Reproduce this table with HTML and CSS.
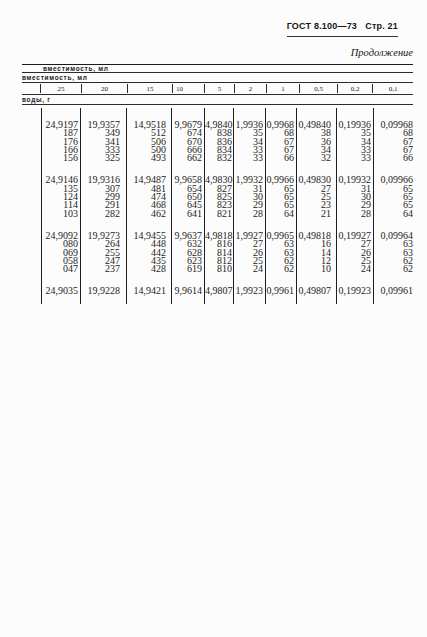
FILE: index.html
```html
<!DOCTYPE html>
<html lang="ru">
<head>
<meta charset="utf-8">
<title>ГОСТ 8.100—73 Стр. 21</title>
<link rel="stylesheet" href="styles.css">
</head>
<body>
<div class="page">
  <div class="head"><span class="gost">ГОСТ 8.100—73 &nbsp; Стр. 21</span></div>
  <div class="cont">Продолжение</div>
  <div class="table">
    <div class="hrow r1">вместимость, мл</div>
    <div class="hrow r2">вместимость, мл</div>
    <div class="hrow r3">
      <span class="hc c0"></span>
      <span class="hc c1">25</span>
      <span class="hc c2">20</span>
      <span class="hc c3">15</span>
      <span class="hc c4 left">10</span>
      <span class="hc c5">5</span>
      <span class="hc c6">2</span>
      <span class="hc c7">1</span>
      <span class="hc c8">0,5</span>
      <span class="hc c9">0,2</span>
      <span class="hc c10 last">0,1</span>
    </div>
    <div class="hrow r4">воды, г</div>
    <div class="body">
      <div class="col c1">
        <div class="grp"><span>24,9197</span><span>187</span><span>176</span><span>166</span><span>156</span></div>
        <div class="grp"><span>24,9146</span><span>135</span><span>124</span><span>114</span><span>103</span></div>
        <div class="grp"><span>24,9092</span><span>080</span><span>069</span><span>058</span><span>047</span></div>
        <div class="grp fin"><span>24,9035</span></div>
      </div>
      <div class="col c2">
        <div class="grp"><span>19,9357</span><span>349</span><span>341</span><span>333</span><span>325</span></div>
        <div class="grp"><span>19,9316</span><span>307</span><span>299</span><span>291</span><span>282</span></div>
        <div class="grp"><span>19,9273</span><span>264</span><span>255</span><span>247</span><span>237</span></div>
        <div class="grp fin"><span>19,9228</span></div>
      </div>
      <div class="col c3">
        <div class="grp"><span>14,9518</span><span>512</span><span>506</span><span>500</span><span>493</span></div>
        <div class="grp"><span>14,9487</span><span>481</span><span>474</span><span>468</span><span>462</span></div>
        <div class="grp"><span>14,9455</span><span>448</span><span>442</span><span>435</span><span>428</span></div>
        <div class="grp fin"><span>14,9421</span></div>
      </div>
      <div class="col c4">
        <div class="grp"><span>9,9679</span><span>674</span><span>670</span><span>666</span><span>662</span></div>
        <div class="grp"><span>9,9658</span><span>654</span><span>650</span><span>645</span><span>641</span></div>
        <div class="grp"><span>9,9637</span><span>632</span><span>628</span><span>623</span><span>619</span></div>
        <div class="grp fin"><span>9,9614</span></div>
      </div>
      <div class="col c5">
        <div class="grp"><span>4,9840</span><span>838</span><span>836</span><span>834</span><span>832</span></div>
        <div class="grp"><span>4,9830</span><span>827</span><span>825</span><span>823</span><span>821</span></div>
        <div class="grp"><span>4,9818</span><span>816</span><span>814</span><span>812</span><span>810</span></div>
        <div class="grp fin"><span>4,9807</span></div>
      </div>
      <div class="col c6">
        <div class="grp"><span>1,9936</span><span>35</span><span>34</span><span>33</span><span>33</span></div>
        <div class="grp"><span>1,9932</span><span>31</span><span>30</span><span>29</span><span>28</span></div>
        <div class="grp"><span>1,9927</span><span>27</span><span>26</span><span>25</span><span>24</span></div>
        <div class="grp fin"><span>1,9923</span></div>
      </div>
      <div class="col c7">
        <div class="grp"><span>0,9968</span><span>68</span><span>67</span><span>67</span><span>66</span></div>
        <div class="grp"><span>0,9966</span><span>65</span><span>65</span><span>65</span><span>64</span></div>
        <div class="grp"><span>0,9965</span><span>63</span><span>63</span><span>62</span><span>62</span></div>
        <div class="grp fin"><span>0,9961</span></div>
      </div>
      <div class="col c8">
        <div class="grp"><span>0,49840</span><span>38</span><span>36</span><span>34</span><span>32</span></div>
        <div class="grp"><span>0,49830</span><span>27</span><span>25</span><span>23</span><span>21</span></div>
        <div class="grp"><span>0,49818</span><span>16</span><span>14</span><span>12</span><span>10</span></div>
        <div class="grp fin"><span>0,49807</span></div>
      </div>
      <div class="col c9">
        <div class="grp"><span>0,19936</span><span>35</span><span>34</span><span>33</span><span>33</span></div>
        <div class="grp"><span>0,19932</span><span>31</span><span>30</span><span>29</span><span>28</span></div>
        <div class="grp"><span>0,19927</span><span>27</span><span>26</span><span>25</span><span>24</span></div>
        <div class="grp fin"><span>0,19923</span></div>
      </div>
      <div class="col c10 last">
        <div class="grp"><span>0,09968</span><span>68</span><span>67</span><span>67</span><span>66</span></div>
        <div class="grp"><span>0,09966</span><span>65</span><span>65</span><span>65</span><span>64</span></div>
        <div class="grp"><span>0,09964</span><span>63</span><span>63</span><span>62</span><span>62</span></div>
        <div class="grp fin"><span>0,09961</span></div>
      </div>
    </div>
  </div>
</div>
</body>
</html>
```

FILE: styles.css
```css
html, body {
  margin: 0;
  padding: 0;
  background: #fcfcfc;
}

.page {
  width: 427px;
  height: 637px;
  color: #161616;
  font-family: "Liberation Serif", "Times New Roman", serif;
  overflow: hidden;
}

.head {
  display: flex;
  justify-content: flex-end;
  padding: 21px 29px 0 0;
}

.gost {
  font-family: "Liberation Sans", Arial, sans-serif;
  font-weight: bold;
  font-size: 9px;
  line-height: 11px;
  padding: 0 0 4px 0;
  border-bottom: 1px solid #333;
  white-space: pre;
  letter-spacing: 0.2px;
}

.cont {
  text-align: right;
  padding: 10px 14px 0 0;
  font-style: italic;
  font-size: 10.5px;
  line-height: 12px;
}

.table {
  margin: 5px 0 0 22px;
  width: 391px;
  border-top: 1.5px solid #1a1a1a;
}

.hrow {
  box-sizing: border-box;
  border-bottom: 1px solid #2a2a2a;
  font-family: "Liberation Sans", Arial, sans-serif;
  font-weight: bold;
  font-size: 6.5px;
  letter-spacing: 0.7px;
  color: #222;
}

.r1 {
  height: 8px;
  line-height: 7px;
  padding-left: 21px;
}

.r2 {
  height: 10px;
  line-height: 9px;
}

.r3 {
  height: 12px;
  display: flex;
  font-family: "Liberation Serif", "Times New Roman", serif;
  font-weight: normal;
  font-size: 7px;
  letter-spacing: 0;
}

.r4 {
  height: 10px;
  line-height: 9px;
}

.hc {
  box-sizing: border-box;
  border-right: 1px solid #2a2a2a;
  text-align: center;
  margin: 1px 0;
  line-height: 10px;
}

.hc.left {
  text-align: left;
  padding-left: 3px;
}

.hc.last {
  border-right: none;
}

.hc.c0 { width: 19px; }
.hc.c1 { width: 41px; }
.hc.c2 { width: 46px; }
.hc.c3 { width: 45px; }
.hc.c4 { width: 32px; }
.hc.c5 { width: 30px; }
.hc.c6 { width: 32px; }
.hc.c7 { width: 33px; }
.hc.c8 { width: 38px; }
.hc.c9 { width: 35px; }
.hc.c10 { width: 40px; }

.body {
  display: flex;
  margin-left: 19px;
  margin-top: 3px;
}

.col {
  box-sizing: border-box;
  border-right: 1px solid #1e1e1e;
  padding: 13px 2px 8px 0;
  text-align: right;
  font-size: 10px;
  line-height: 8.3px;
  color: #1c1c1c;
}

.col.c1 { width: 40px; border-left: 1px solid #1e1e1e; }
.col.c2 { width: 46px; padding-right: 6px; }
.col.c3 { width: 45px; padding-right: 5px; }
.col.c4 { width: 33px; }
.col.c5 { width: 29px; padding-right: 1px; }
.col.c6 { width: 32px; }
.col.c7 { width: 31px; }
.col.c8 { width: 40px; padding-right: 5px; }
.col.c9 { width: 37px; }
.col.c10 { width: 39px; padding-right: 0; }

.col.last {
  border-right: none;
}

.grp {
  display: flex;
  flex-direction: column;
  margin-bottom: 14px;
}

.grp.fin {
  margin-bottom: 0;
  margin-top: 3px;
}

.grp span {
  display: block;
  height: 8.3px;
  white-space: nowrap;
}
```
